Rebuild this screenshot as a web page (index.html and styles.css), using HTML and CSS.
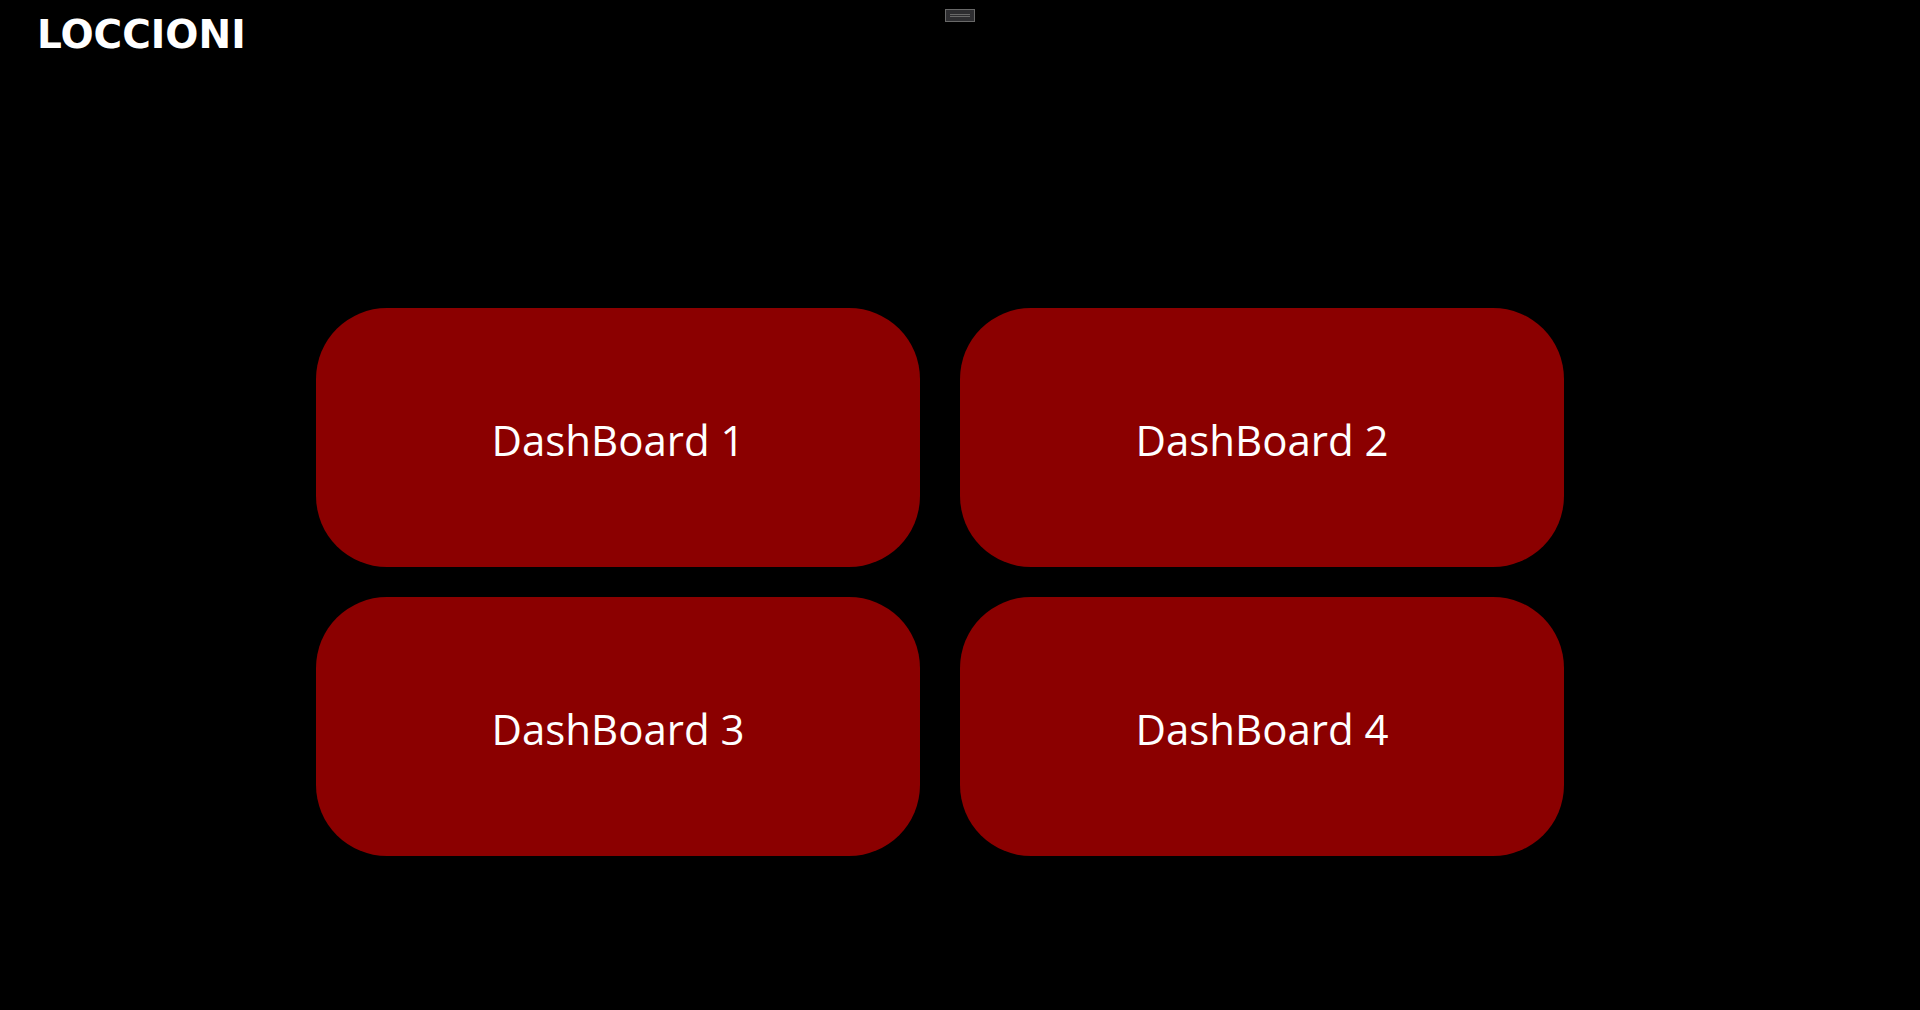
FILE: index.html
```html
<!DOCTYPE html>
<html lang="en">
<head>
  <meta charset="utf-8">
  <meta name="viewport" content="width=device-width, initial-scale=1">
  <title>Loccioni</title>
  <link rel="stylesheet" href="styles.css">
</head>
<body>
  <header class="header">
    <span class="brand">LOCCIONI</span>
  </header>
  <button class="grip" type="button" aria-label="Expand toolbar">
    <svg class="grip-icon" viewBox="0 0 20 3" aria-hidden="true">
      <rect width="20" height="1"/>
      <rect y="2" width="20" height="1"/>
    </svg>
  </button>
  <main class="dashboards">
    <button class="tile" type="button">DashBoard 1</button>
    <button class="tile" type="button">DashBoard 2</button>
    <button class="tile" type="button">DashBoard 3</button>
    <button class="tile" type="button">DashBoard 4</button>
  </main>
</body>
</html>
```

FILE: styles.css
```css
* {
  box-sizing: border-box;
}

body {
  margin: 0;
  min-height: 100vh;
  display: flex;
  flex-direction: column;
  background: #000;
  color: #fff;
  font-family: "Open Sans", "Noto Sans", sans-serif;
}

.header {
  display: flex;
  align-items: center;
  height: 70px;
  padding: 0 37px;
}

.brand {
  font: bold 39px/44px "DejaVu Sans", sans-serif;
}

/* Collapsed toolbar that floats over the top edge */
.grip {
  position: absolute;
  top: 9px;
  left: 50%;
  display: flex;
  align-items: center;
  justify-content: center;
  width: 30px;
  height: 13px;
  margin-left: -15px;
  padding: 0;
  border: 1px solid #686868;
  background: #2d2d30;
}

.grip-icon {
  width: 20px;
  height: 3px;
  fill: #686868;
}

.dashboards {
  flex: 1;
  display: grid;
  grid-template-columns: 1fr 1fr;
  grid-auto-rows: minmax(200px, 1fr);
  gap: 30px 40px;
  padding: 238px 356px 154px 316px;
}

.tile {
  padding: 4px 16px 0;
  border: 0;
  border-radius: 71px;
  background: #8b0000;
  color: #fff;
  font: 42px/60px "Open Sans", "Noto Sans", sans-serif;
}
```
